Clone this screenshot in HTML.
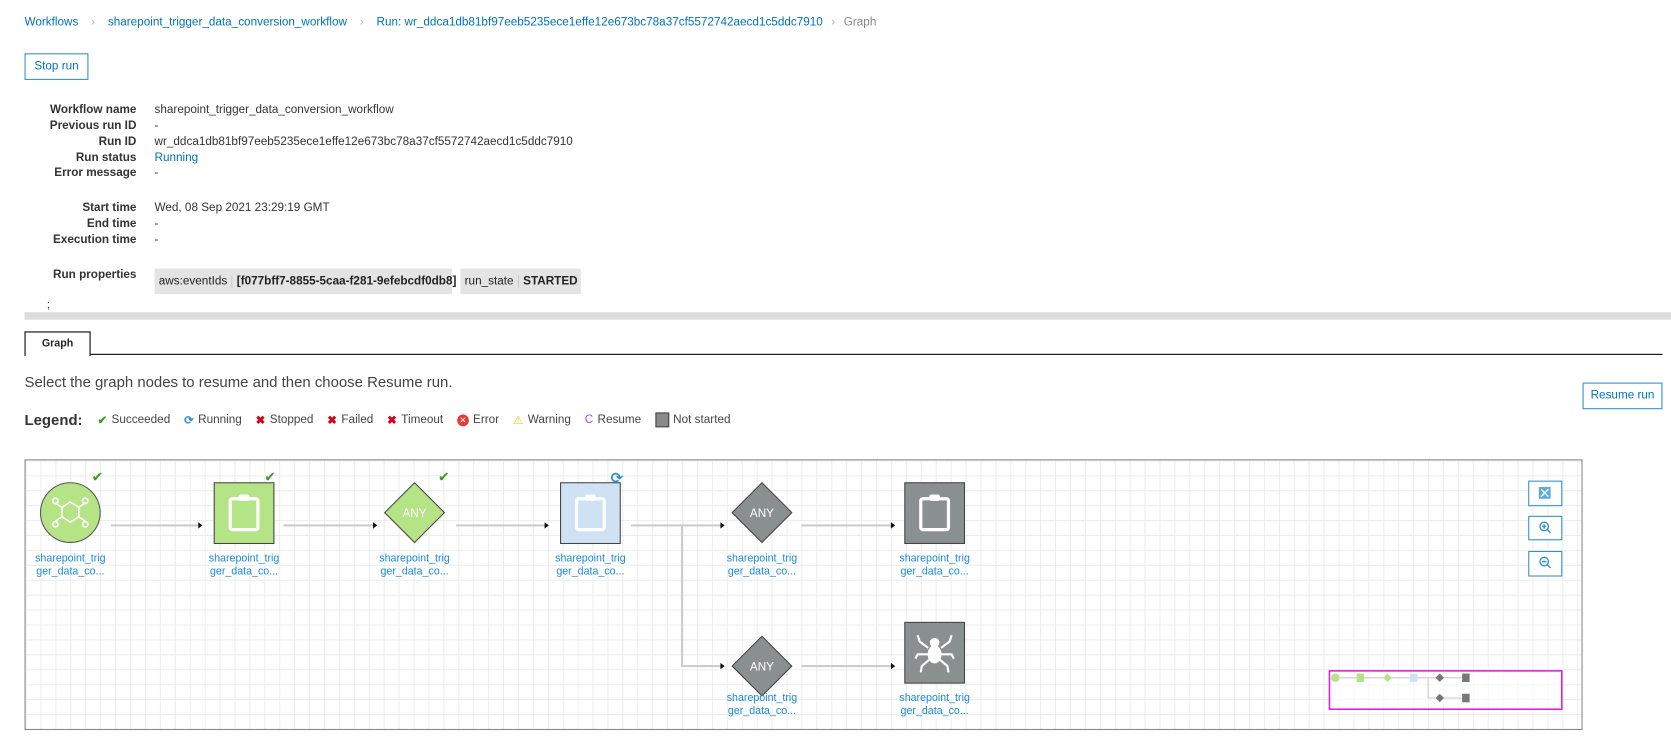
<!DOCTYPE html>
<html><head><meta charset="utf-8"><style>
html,body{margin:0;padding:0;background:#fff;width:1671px;height:749px;overflow:hidden}
#w{position:absolute;left:0;top:0;width:1568px;height:703px;transform:scale(1.0657);transform-origin:0 0;font-family:"Liberation Sans",Arial,sans-serif;color:#222}
.a{position:absolute;white-space:nowrap}
.bl{color:#0073bb}
.lbl{position:absolute;right:1440px;font-weight:bold;font-size:11px;white-space:nowrap;color:#333}
.val{position:absolute;left:145px;font-size:11px;white-space:nowrap;color:#333}
.btn{position:absolute;border:1px solid #2e8fd6;color:#0073bb;font-size:11px;text-align:center;box-sizing:border-box;background:#fff}
.nl{position:absolute;width:90px;text-align:center;font-size:10px;color:#1a8ad9;line-height:12px}
.lg{font-size:11px;color:#444;margin-right:13px;display:inline-flex;align-items:center;gap:4px}
</style></head><body><div id="w">
<div class="a" style="left:23px;top:15px;font-size:11px"><span class="bl">Workflows</span><span style="color:#bbb;margin:0 12px">›</span><span class="bl">sharepoint_trigger_data_conversion_workflow</span><span style="color:#bbb;margin:0 12px">›</span><span class="bl">Run: wr_ddca1db81bf97eeb5235ece1effe12e673bc78a37cf5572742aecd1c5ddc7910</span><span style="color:#bbb;margin:0 8px">›</span><span style="color:#888">Graph</span></div>
<div class="btn" style="left:23px;top:50px;width:60px;height:25px;line-height:23px">Stop run</div>

<div class="lbl" style="top:97px">Workflow name</div><div class="val" style="top:97px">sharepoint_trigger_data_conversion_workflow</div>
<div class="lbl" style="top:112px">Previous run ID</div><div class="val" style="top:112px">-</div>
<div class="lbl" style="top:127px">Run ID</div><div class="val" style="top:127px">wr_ddca1db81bf97eeb5235ece1effe12e673bc78a37cf5572742aecd1c5ddc7910</div>
<div class="lbl" style="top:142px">Run status</div><div class="val bl" style="top:142px;color:#0073bb">Running</div>
<div class="lbl" style="top:156px">Error message</div><div class="val" style="top:156px">-</div>
<div class="lbl" style="top:189px">Start time</div><div class="val" style="top:189px">Wed, 08 Sep 2021 23:29:19 GMT</div>
<div class="lbl" style="top:204px">End time</div><div class="val" style="top:204px">-</div>
<div class="lbl" style="top:219px">Execution time</div><div class="val" style="top:219px">-</div>
<div class="lbl" style="top:252px">Run properties</div>
<div class="a" style="left:145px;top:252px;width:279px;height:24px;background:#e4e4e4;font-size:11px;line-height:24px"><span style="padding-left:4px">aws:eventIds</span><span style="border-left:1px solid #ccc;margin-left:4px;padding-left:4px;font-weight:bold">[f077bff7-8855-5caa-f281-9efebcdf0db8]</span></div>
<div class="a" style="left:432px;top:252px;width:113px;height:24px;background:#e4e4e4;font-size:11px;line-height:24px"><span style="padding-left:4px">run_state</span><span style="border-left:1px solid #ccc;margin-left:4px;padding-left:4px;font-weight:bold">STARTED</span></div>
<div class="a" style="left:44px;top:281px;font-size:10px">;</div>
<div class="a" style="left:23px;top:293px;width:1545px;height:7px;background:#dcdcdc"></div>
<div class="a" style="left:85px;top:332px;width:1475px;height:1px;background:#000"></div>
<div class="a" style="left:23px;top:311px;width:62px;height:23px;border:1px solid #000;border-bottom:none;box-sizing:border-box;background:#fff;font-size:10px;font-weight:bold;text-align:center;line-height:22px">Graph</div>
<div class="a" style="left:23px;top:350px;font-size:14px;color:#444">Select the graph nodes to resume and then choose Resume run.</div>
<div class="btn" style="left:1485px;top:359px;width:75px;height:25px;line-height:23px">Resume run</div>
<div class="a" style="left:23px;top:386px;font-size:11px;display:flex;align-items:center">
<b style="font-size:14px;color:#333;margin-right:14px">Legend:</b>
<span class="lg"><span style="color:#3a9d23;font-weight:bold">✔</span>Succeeded</span>
<span class="lg"><span style="color:#2e8fd6;font-weight:bold">⟳</span>Running</span>
<span class="lg"><span style="color:#d0021b;font-weight:bold">✖</span>Stopped</span>
<span class="lg"><span style="color:#d0021b;font-weight:bold">✖</span>Failed</span>
<span class="lg"><span style="color:#d0021b;font-weight:bold">✖</span>Timeout</span>
<span class="lg"><span style="display:inline-block;width:11px;height:11px;border-radius:50%;background:#e53935;color:#fff;font-size:8px;text-align:center;line-height:11px">✕</span>Error</span>
<span class="lg"><span style="color:#e8c800">⚠</span>Warning</span>
<span class="lg"><span style="color:#a04ef6">C</span>Resume</span>
<span class="lg"><span style="display:inline-block;width:11px;height:12px;background:#8a8a8a;border:1px solid #444"></span>Not started</span>
</div>

<div class="a" style="left:23px;top:431px;width:1462px;height:254px;border:1px solid #888;box-sizing:border-box;background-color:#fff;background-image:linear-gradient(#ececec 1px,transparent 1px),linear-gradient(90deg,#ececec 1px,transparent 1px);background-size:14px 14px;overflow:hidden"></div>
<svg class="a" style="left:0;top:0" width="1568" height="703">
<g stroke="#ccc" stroke-width="2" fill="none">
<path d="M104 493H186M266 493H350M428 493H511M592 493H676M752 493H836M640 493V625H676M752 625H836"/>
</g>
<g fill="#111"><path d="M186 490l4 3-4 3z M350 490l4 3-4 3z M511 490l4 3-4 3z M676 490l4 3-4 3z M836 490l4 3-4 3z M676 622l4 3-4 3z M836 622l4 3-4 3z"/></g>
<circle cx="66" cy="481" r="28" fill="#b5e486" stroke="#555" stroke-width="1"/>
<g stroke="#fff" stroke-width="1.5" fill="none"><path d="M66 471l8 5v9l-8 5-8-5v-9z"/><path d="M58 476l-6-4m22 4l6-4m-6 13l6 4m-22-4l-6 4"/><circle cx="52" cy="470" r="2.5"/><circle cx="80" cy="470" r="2.5"/><circle cx="80" cy="492" r="2.5"/><circle cx="52" cy="492" r="2.5"/></g>
<rect x="201" y="453" width="56" height="57" fill="#b5e486" stroke="#444"/>
<rect x="526" y="453" width="56" height="57" fill="#cfe2f3" stroke="#444"/>
<rect x="849" y="453" width="56" height="57" fill="#8a8f8f" stroke="#444"/>
<rect x="849" y="584" width="56" height="57" fill="#8a8f8f" stroke="#444"/>
<g fill="none" stroke="#fff" stroke-width="3" stroke-linejoin="round">
<rect x="216" y="468" width="26" height="29" rx="2"/><rect x="541" y="468" width="26" height="29" rx="2"/><rect x="864" y="468" width="26" height="29" rx="2"/>
</g>
<g fill="#fff"><rect x="224" y="464" width="10" height="6" rx="2"/><rect x="549" y="464" width="10" height="6" rx="2"/><rect x="872" y="464" width="10" height="6" rx="2"/></g>
<g fill="#fff" stroke="#fff"><ellipse cx="877" cy="614" rx="6" ry="8"/><circle cx="877" cy="603" r="4"/><path d="M871 608l-8-6-2-6M883 608l8-6 2-6M871 614h-10l-2 4M883 614h10l2 4M872 619l-7 6-1 6M882 619l7 6 1 6" fill="none" stroke-width="2"/></g>
<g stroke="#444"><path d="M389 453l28 28-28 28-28-28z" fill="#b5e486"/><path d="M715 453l28 28-28 28-28-28z" fill="#8a8f8f"/><path d="M715 597l28 28-28 28-28-28z" fill="#8a8f8f"/></g>
<g fill="#fff" font-family="Liberation Sans,sans-serif" font-size="11" text-anchor="middle"><text x="389" y="485">ANY</text><text x="715" y="485">ANY</text><text x="715" y="629">ANY</text></g>
<g fill="#3a9d23" font-size="13" font-family="DejaVu Sans,sans-serif" font-weight="bold"><text x="86" y="452">✔</text><text x="248" y="452">✔</text><text x="411" y="452">✔</text></g>
<text x="573" y="453" fill="#2e8fd6" font-size="14" font-family="DejaVu Sans,sans-serif" font-weight="bold">⟳</text>
<g fill="#fff" stroke="#2e8fd6"><rect x="1434.5" y="451.5" width="31" height="23"/><rect x="1434.5" y="484.5" width="31" height="22"/><rect x="1434.5" y="517.5" width="31" height="23"/></g>
<g stroke="#2e8fd6" fill="none" stroke-width="1.3"><rect x="1444" y="457" width="11" height="11" fill="#5aa8e0" stroke="none"/><path d="M1446 459l7 7m0-7l-7 7" stroke="#fff"/><circle cx="1449" cy="494" r="4"/><path d="M1452 497l3 3M1447 494h4M1449 492v4"/><circle cx="1449" cy="527" r="4"/><path d="M1452 530l3 3M1447 527h4"/></g>
<rect x="1247.5" y="629.5" width="218" height="36" fill="#fff" fill-opacity=".6" stroke="#e020e0" stroke-width="1.5"/>
<g stroke="#ccc" fill="none"><path d="M1255 636h120M1340 636v19h35"/></g>
<circle cx="1253" cy="636" r="4" fill="#b5e486"/><rect x="1273" y="632" width="7" height="8" fill="#b5e486"/><path d="M1302 632l4 4-4 4-4-4z" fill="#b5e486"/><rect x="1323" y="632" width="7" height="8" fill="#cfe2f3"/><path d="M1351 632l4 4-4 4-4-4z" fill="#777"/><rect x="1372" y="632" width="7" height="8" fill="#777"/><path d="M1351 651l4 4-4 4-4-4z" fill="#777"/><rect x="1372" y="651" width="7" height="8" fill="#777"/>
</svg>
<div class="nl" style="left:21px;top:519px">sharepoint_trig<br>ger_data_co...</div>
<div class="nl" style="left:184px;top:519px">sharepoint_trig<br>ger_data_co...</div>
<div class="nl" style="left:344px;top:519px">sharepoint_trig<br>ger_data_co...</div>
<div class="nl" style="left:509px;top:519px">sharepoint_trig<br>ger_data_co...</div>
<div class="nl" style="left:670px;top:519px">sharepoint_trig<br>ger_data_co...</div>
<div class="nl" style="left:832px;top:519px">sharepoint_trig<br>ger_data_co...</div>
<div class="nl" style="left:670px;top:650px">sharepoint_trig<br>ger_data_co...</div>
<div class="nl" style="left:832px;top:650px">sharepoint_trig<br>ger_data_co...</div>
</div></body></html>
